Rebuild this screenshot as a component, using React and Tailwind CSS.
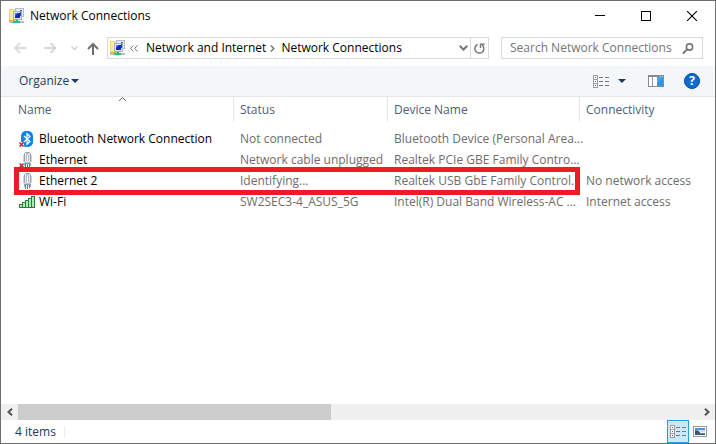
import React from "react";

const connections = [
  { icon: "bluetooth", name: "Bluetooth Network Connection", status: "Not connected", device: "Bluetooth Device (Personal Area...", connectivity: "" },
  { icon: "unplugged", name: "Ethernet", status: "Network cable unplugged", device: "Realtek PCIe GBE Family Contro...", connectivity: "" },
  { icon: "ethernet", name: "Ethernet 2", status: "Identifying...", device: "Realtek USB GbE Family Control...", connectivity: "No network access" },
  { icon: "wifi", name: "Wi-Fi", status: "SW2SEC3-4_ASUS_5G", device: "Intel(R) Dual Band Wireless-AC ...", connectivity: "Internet access" },
];

function NetworkIcon() {
  return (
    <svg className="size-4 shrink-0" viewBox="0 0 16 16" aria-hidden="true">
      <path d="M0 1h5l1 1h3v11H0z" fill="#f3d672" />
      <path d="M1 2h4v10H1z" fill="#faeaa0" />
      <path d="M0 12h6v1H0z" fill="#d8b551" />
      <path d="M6 0h9v9H6z" fill="#b4bdc4" />
      <path d="M7 1h7v7H7z" fill="#e9eff3" />
      <path d="M11 2h2v5h-2z" fill="#2f55d8" />
      <path d="M4 3h9v9H4z" fill="#a5b0ba" />
      <path d="M5 4h7v7H5z" fill="#dfe8f2" />
      <path d="M6 5h5v5H6z" fill="#1426c4" />
      <path d="M6 5h3L6 8z" fill="#5574ee" />
      <path d="M11 4h1v4h-1z" fill="#2147d5" />
      <path d="M0 13h15v2H0z" fill="#b7c1c4" />
      <path d="M7 12h2v1h2v2H5v-2h2z" fill="#12b56c" />
      <path d="M4 13h7v2H4z" fill="#19c77c" />
    </svg>
  );
}

function RedCross() {
  return <path d="M0.500 11.500l4 4M4.500 11.500l-4 4" stroke="#c3222b" strokeWidth="1.500" fill="none" />;
}

function ConnectionIcon({ kind }) {
  if (kind === "bluetooth") {
    return (
      <svg className="size-4 shrink-0" viewBox="0 0 16 16" aria-hidden="true">
        <rect x="2" y="0" width="12" height="16" rx="5" fill="#0a84f5" />
        <path d="M5 5l6 5.500-3 2.800V2.700l3 2.800L5 11" stroke="#fff" strokeWidth="1.200" fill="none" />
        <path d="M0 11h4l1 2v3H0z" fill="#fff" />
        <RedCross />
      </svg>
    );
  }
  if (kind === "wifi") {
    return (
      <svg className="size-4 shrink-0" viewBox="0 0 16 16" shapeRendering="crispEdges" aria-hidden="true">
        <path d="M1 10h2v3H1zM4 9h2v4H4zM7 7h2v6H7zM10 5h2v8h-2zM13 3h2v10h-2z" fill="#a9efb4" />
        <path d="M0.500 10.500h3v3h-3zM3.500 8.500h3v5h-3zM6.500 6.500h3v7h-3zM9.500 4.500h3v9h-3zM12.500 2.500h3v11h-3z" fill="none" stroke="#2b7a41" />
      </svg>
    );
  }
  return (
    <svg className="size-4 shrink-0" viewBox="0 0 16 16" aria-hidden="true">
      <path d="M5.500 1.500l1-1h4l1 1v8l-1 1.500h-4l-1-1.500z" fill="#e3e8ee" stroke="#98a1ad" />
      <path d="M4 3h1v7H4zM12 3h1v7h-1z" fill="#cdd3db" />
      <path d="M7 1h3v2H7z" fill="#c3cad3" />
      <path d="M7 3h3v6H7z" fill="#f9fbfd" />
      <path d="M7 3h1v6H7zM9 3h1v6H9z" fill="#b4bfcc" />
      <path d="M5 11h7v1H5z" fill="#8f9aa8" />
      <path d="M5 12h2v2H5zM10 12h2v2h-2z" fill="#7cc6df" />
      <path d="M6 12h1v4H6zM8 12h1v4H8zM10 12h1v3h-1z" fill="#268bb8" />
      {kind === "unplugged" && <RedCross />}
    </svg>
  );
}

function DetailsGlyph() {
  return (
    <svg className="h-[13px] w-4 shrink-0" viewBox="0 0 16 13" shapeRendering="crispEdges" aria-hidden="true">
      <path d="M0.500 0.500h4v12h-4zM0.500 4.500h4M0.500 8.500h4" fill="#fff" stroke="#9b9b9b" />
      <path d="M2 2h1v1H2z" fill="#555" />
      <path d="M2 6h1v1H2z" fill="#2384d2" />
      <path d="M2 10h1v1H2z" fill="#c21f1f" />
      <path d="M6 2h4v1H6zM12 2h4v1h-4zM6 6h4v1H6zM12 6h4v1h-4zM6 10h4v1H6zM12 10h4v1h-4z" fill="#777" />
    </svg>
  );
}

function DownTriangle() {
  return (
    <svg className="h-1 w-2" viewBox="0 0 8 4" aria-hidden="true">
      <path d="M0 0h8L4 4z" fill="#1e395b" />
    </svg>
  );
}

function TitleBar() {
  return (
    <header className="flex h-[29px] shrink-0 items-center pl-2">
      <NetworkIcon />
      <h1 className="ml-[5px] flex-1 text-black">Network Connections</h1>
      <button type="button" aria-label="Minimize" className="flex h-full w-[46px] items-center justify-center">
        <svg className="size-[10px]" viewBox="0 0 10 10" shapeRendering="crispEdges"><path d="M0 4h10v1H0z" /></svg>
      </button>
      <button type="button" aria-label="Maximize" className="flex h-full w-[46px] items-center justify-center">
        <svg className="size-[10px]" viewBox="0 0 10 10" shapeRendering="crispEdges"><path d="M0.500 0.500h9v9h-9z" fill="none" stroke="#000" /></svg>
      </button>
      <button type="button" aria-label="Close" className="flex h-full w-[46px] items-center justify-center">
        <svg className="size-[10px]" viewBox="0 0 10 10"><path d="M0 0l10 10M10 0L0 10" fill="none" stroke="#000" strokeWidth="1.100" /></svg>
      </button>
    </header>
  );
}

function NavBar() {
  return (
    <nav className="flex h-9 shrink-0 items-center px-3">
      <button type="button" aria-label="Back" disabled className="w-4">
        <svg className="h-3 w-4" viewBox="0 0 16 12" fill="none" stroke="#d9d9d9" strokeWidth="1.800"><path d="M13 6H2M7 1L2 6l5 5" /></svg>
      </button>
      <button type="button" aria-label="Forward" disabled className="ml-3.5 w-4">
        <svg className="h-3 w-4" viewBox="0 0 16 12" fill="none" stroke="#d9d9d9" strokeWidth="1.800"><path d="M1 6h11M7.500 1l5 5-5 5" /></svg>
      </button>
      <button type="button" aria-label="Recent locations" disabled className="ml-3 w-2">
        <svg className="h-1 w-[7px]" viewBox="0 0 7 4" fill="none" stroke="#cfcfcf" strokeWidth="1.300"><path d="M0.500 0.500l3 3 3-3" /></svg>
      </button>
      <button type="button" aria-label="Up" className="ml-2 w-3">
        <svg className="h-[13px] w-3" viewBox="0 0 12 13" fill="none" stroke="#6f6f6f" strokeWidth="2"><path d="M6 13V2M1 7l5-5 5 5" /></svg>
      </button>
      <div className="ml-2 flex h-[22px] flex-1 items-center border border-[#d9d9d9] pl-0.5 text-black">
        <NetworkIcon />
        <svg className="ml-1 h-[7px] w-2" viewBox="0 0 8 7" fill="none" stroke="#757575"><path d="M3.500 0.500l-3 3 3 3M7.500 0.500l-3 3 3 3" /></svg>
        <a href="#network" className="ml-2 whitespace-nowrap">Network and Internet</a>
        <svg className="ml-1 h-[7px] w-[5px]" viewBox="0 0 5 7" fill="none" stroke="#757575" strokeWidth="1.400"><path d="M0.800 0.500l3 3-3 3" /></svg>
        <a href="#connections" className="ml-1.5 flex-1 whitespace-nowrap">Network Connections</a>
        <button type="button" aria-label="Previous locations" className="mr-0.5">
          <svg className="h-1.5 w-[9px]" viewBox="0 0 9 6" fill="none" stroke="#777" strokeWidth="2"><path d="M0.700 0.700l3.800 3.800 3.800-3.800" /></svg>
        </button>
        <button type="button" aria-label="Refresh" className="flex h-full w-[18px] items-center justify-center border-l border-[#d9d9d9]">
          <svg className="size-[11px]" viewBox="0 0 11 11" fill="none" stroke="#777" strokeWidth="1.500"><path d="M3.500 1.500A4.500 4.500 0 1 0 8.200 2.100M6.500 5V1.200h4" /></svg>
        </button>
      </div>
      <label className="ml-3 flex h-[22px] w-[202px] items-center border border-[#d9d9d9] px-2">
        <input type="text" aria-label="Search Network Connections" placeholder="Search Network Connections" className="min-w-0 flex-1 outline-none placeholder:text-[#757575] placeholder:opacity-100" />
        <svg className="h-[11px] w-3 shrink-0" viewBox="0 0 12 11" fill="none" stroke="#757575"><circle cx="7.500" cy="4" r="3.100" strokeWidth="1.600" /><path d="M5 6.500L0.800 10.600" strokeWidth="2" /></svg>
      </label>
    </nav>
  );
}

function Toolbar() {
  return (
    <div className="flex h-[31px] shrink-0 items-center border-b border-[#e5e7ea] bg-[#f5f6f7] pr-[15px] pl-[18px] text-[#1e395b]">
      <button type="button" className="flex items-center gap-0.5">Organize <DownTriangle /></button>
      <span className="flex-1" />
      <button type="button" aria-label="Change your view" className="flex items-center gap-[9px]"><DetailsGlyph /><DownTriangle /></button>
      <button type="button" aria-label="Preview pane" className="ml-[22px]">
        <svg className="h-3 w-4" viewBox="0 0 16 12" shapeRendering="crispEdges">
          <path d="M0.500 0.500h15v11h-15z" fill="#fff" stroke="#8b8b8b" />
          <path d="M0 0h16v2H0z" fill="#858b91" />
          <path d="M4 2h1v9H4z" fill="#999" />
          <path d="M9 2h6v9H9z" fill="#46a4ec" />
          <path d="M9 8l6-6v9H9z" fill="#2f94e4" />
          <path d="M12 1h1v1h-1zM14 1h1v1h-1z" fill="#8ed4ff" />
        </svg>
      </button>
      <button type="button" aria-label="Help" className="ml-5 flex size-4 items-center justify-center rounded-full border border-[#004e98] bg-[#0a6ccf] text-xs leading-none font-bold text-white">?</button>
    </div>
  );
}

function ConnectionTable() {
  const head = "h-[25px] pt-px pl-1.5 text-left font-normal";
  const cell = "h-[21px] whitespace-nowrap pl-1.5 text-[#6d6d6d]";
  return (
    <main className="relative flex-1">
      <table className="w-full table-fixed border-separate border-spacing-0">
        <colgroup>
          <col className="w-[233px]" />
          <col className="w-[154px]" />
          <col className="w-[192px]" />
          <col />
        </colgroup>
        <thead className="text-[#4c607a]">
          <tr>
            <th className="relative h-[25px] border-r border-[#e5e5e5] pt-px pl-[17px] text-left font-normal">
              Name
              <svg className="absolute top-0 left-[117px] h-1 w-[9px]" viewBox="0 0 9 4" fill="none" stroke="#666"><path d="M0.800 4l3.700-3.400L8.200 4" /></svg>
            </th>
            <th className={head + " border-r border-[#e5e5e5]"}>Status</th>
            <th className={head + " border-r border-[#e5e5e5]"}>Device Name</th>
            <th className={head}>Connectivity</th>
          </tr>
        </thead>
        <tbody className="before:block before:h-1.5">
          {connections.map((c) => (
            <tr key={c.name}>
              <td className="h-[21px] pl-[18px] text-black">
                <div className="flex items-center gap-1 whitespace-nowrap"><ConnectionIcon kind={c.icon} />{c.name}</div>
              </td>
              <td className={cell}>{c.status}</td>
              <td className={cell}>{c.device}</td>
              <td className={cell}>{c.connectivity}</td>
            </tr>
          ))}
        </tbody>
      </table>
      <div className="pointer-events-none absolute top-[70px] left-[13px] h-7 w-[566px] border-5 border-[#ed1c24]" />
    </main>
  );
}

function ScrollBar() {
  return (
    <div className="flex h-4 shrink-0 bg-[#f0f0f0]">
      <button type="button" aria-label="Scroll left" className="flex w-[17px] items-center justify-center">
        <svg className="h-2 w-1.5" viewBox="0 0 6 8" fill="none" stroke="#555" strokeWidth="2"><path d="M5 0.700L1.500 4 5 7.300" /></svg>
      </button>
      <div className="flex-1"><div className="h-full w-[46%] bg-[#cdcdcd]" /></div>
      <button type="button" aria-label="Scroll right" className="flex w-[17px] items-center justify-center">
        <svg className="h-2 w-1.5" viewBox="0 0 6 8" fill="none" stroke="#555" strokeWidth="2"><path d="M1 0.700L4.500 4 1 7.300" /></svg>
      </button>
    </div>
  );
}

function StatusBar() {
  return (
    <footer className="flex h-[23px] shrink-0 items-center pr-2 pl-[14px] text-[#1e395b]">
      <span>4 items</span>
      <span className="ml-2 h-3 w-px bg-[#ececec]" />
      <span className="flex-1" />
      <button type="button" aria-label="Details view" className="flex h-full w-[22px] items-center justify-center border border-[#26a0da] bg-[#cbe8f6]"><DetailsGlyph /></button>
      <button type="button" aria-label="Large icons view" className="ml-1">
        <svg className="h-[11px] w-[14px]" viewBox="0 0 14 11" shapeRendering="crispEdges">
          <path d="M0.500 0.500h13v10h-13z" fill="#fff" stroke="#9a9a9a" />
          <path d="M2 2h10v3H2z" fill="#4f93dd" />
          <path d="M5 4h7v2H5z" fill="#c5e1f5" />
          <path d="M2 5h3l3 2h4v2H2z" fill="#315f68" />
          <path d="M6 7h6v1H6z" fill="#5186b4" />
        </svg>
      </button>
    </footer>
  );
}

export default function App() {
  return (
    <div className="flex min-h-screen flex-col border border-[#6e6e6e] bg-white font-['Open_Sans','Noto_Sans',sans-serif] text-xs">
      <TitleBar />
      <NavBar />
      <Toolbar />
      <ConnectionTable />
      <ScrollBar />
      <StatusBar />
    </div>
  );
}
